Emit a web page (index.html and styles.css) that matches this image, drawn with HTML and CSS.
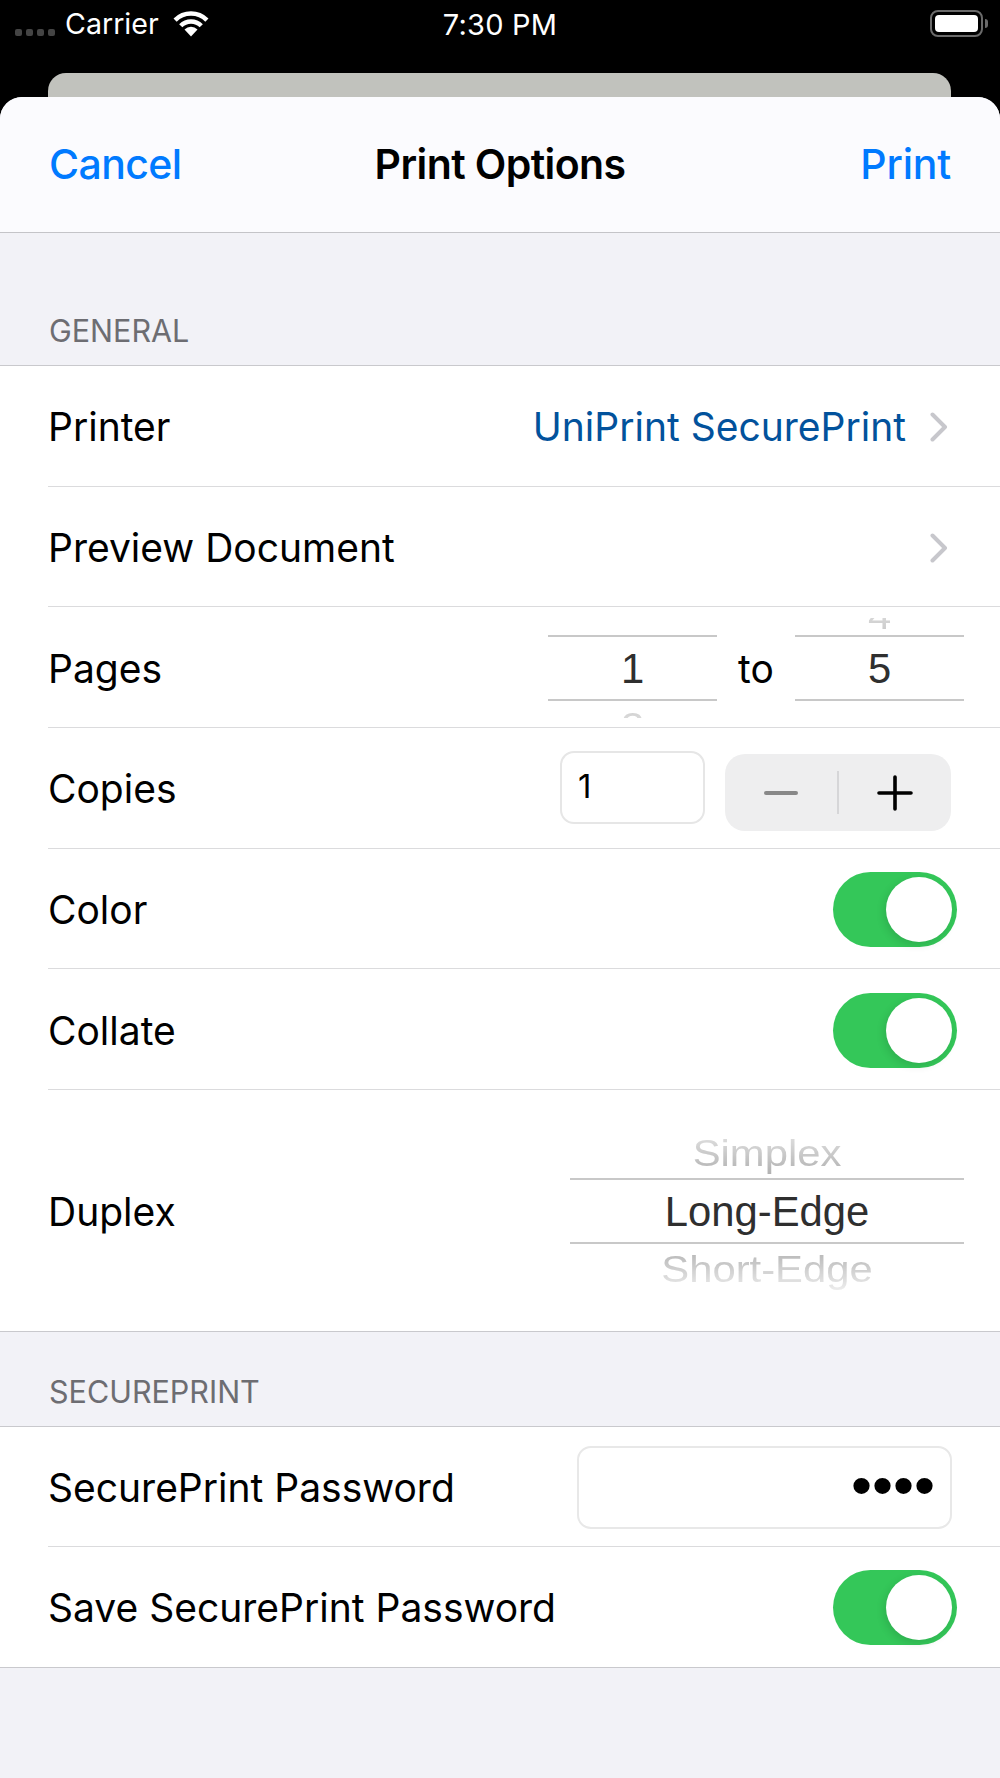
FILE: index.html
```html
<!DOCTYPE html>
<html lang="en">
<head>
  <meta charset="UTF-8" />
  <meta name="viewport" content="width=device-width, initial-scale=1.0"/>
  <title>Print Options</title>
  <link rel="stylesheet" href="styles.css">
</head>
<body>
  <!-- Status bar -->
  <div class="status-bar">
    <div class="status-left">
      <div class="signal"><i></i><i></i><i></i><i></i></div>
      <span class="carrier">Carrier</span>
      <svg class="wifi" width="36" height="27" viewBox="0 0 36 27">
        <path d="M18 26.5 L11.5 19.5 A9.2 9.2 0 0 1 24.5 19.5 Z" fill="#fff"/>
        <path d="M7.75 15.75 A14.5 14.5 0 0 1 28.25 15.75" fill="none" stroke="#fff" stroke-width="4.5"/>
        <path d="M2.1 10.1 A22.5 22.5 0 0 1 33.9 10.1" fill="none" stroke="#fff" stroke-width="4.5"/>
      </svg>
    </div>
    <span class="clock">7:30 PM</span>
    <div class="status-right">
      <div class="battery"><div class="battery-level"></div></div>
      <div class="battery-nub"></div>
    </div>
  </div>

  <div class="card-behind"></div>

  <div class="sheet">
    <div class="nav">
      <span class="nav-btn">Cancel</span>
      <span class="nav-title">Print Options</span>
      <span class="nav-btn nav-btn-right">Print</span>
    </div>

    <!-- General -->
    <div class="section-title section-general">GENERAL</div>
    <div class="group">
      <div class="row">
        <span class="label">Printer</span>
        <div class="row-right">
          <span class="value-link">UniPrint SecurePrint</span>
          <svg class="chevron" width="18" height="30" viewBox="0 0 18 30">
            <path d="M2.5 2.5 L15 15 L2.5 27.5" fill="none" stroke="#c7c7cc" stroke-width="4" stroke-linecap="round" stroke-linejoin="round"/>
          </svg>
        </div>
      </div>
      <div class="row">
        <span class="label">Preview Document</span>
        <div class="row-right">
          <svg class="chevron" width="18" height="30" viewBox="0 0 18 30">
            <path d="M2.5 2.5 L15 15 L2.5 27.5" fill="none" stroke="#c7c7cc" stroke-width="4" stroke-linecap="round" stroke-linejoin="round"/>
          </svg>
        </div>
      </div>
      <div class="row">
        <span class="label">Pages</span>
        <div class="row-right pages">
          <div class="wheel wheel-small">
            <div class="wheel-item"></div>
            <div class="wheel-selected">1</div>
            <div class="wheel-item wheel-below">2</div>
          </div>
          <span class="pages-to">to</span>
          <div class="wheel wheel-small">
            <div class="wheel-item wheel-above">4</div>
            <div class="wheel-selected">5</div>
            <div class="wheel-item"></div>
          </div>
        </div>
      </div>
      <div class="row">
        <span class="label">Copies</span>
        <div class="row-right copies">
          <div class="copies-field">1</div>
          <div class="stepper">
            <div class="stepper-btn"><div class="stepper-minus"></div></div>
            <div class="stepper-divider"></div>
            <div class="stepper-btn">
              <svg width="36" height="36" viewBox="0 0 36 36">
                <path d="M2 18 H34 M18 2 V34" stroke="#000" stroke-width="3.6" stroke-linecap="round"/>
              </svg>
            </div>
          </div>
        </div>
      </div>
      <div class="row">
        <span class="label">Color</span>
        <div class="row-right"><div class="toggle"><div class="knob"></div></div></div>
      </div>
      <div class="row">
        <span class="label">Collate</span>
        <div class="row-right"><div class="toggle"><div class="knob"></div></div></div>
      </div>
      <div class="row row-tall">
        <span class="label">Duplex</span>
        <div class="row-right">
          <div class="wheel wheel-large">
            <div class="wheel-item wheel-above">Simplex</div>
            <div class="wheel-selected">Long-Edge</div>
            <div class="wheel-item wheel-below">Short-Edge</div>
          </div>
        </div>
      </div>
    </div>

    <!-- SecurePrint -->
    <div class="section-title section-secure">SECUREPRINT</div>
    <div class="group">
      <div class="row row-secure">
        <span class="label">SecurePrint Password</span>
        <div class="row-right"><div class="password-field">••••</div></div>
      </div>
      <div class="row row-secure row-last">
        <span class="label">Save SecurePrint Password</span>
        <div class="row-right"><div class="toggle"><div class="knob"></div></div></div>
      </div>
    </div>
  </div>
</body>
</html>
```

FILE: styles.css
```css
* {
  box-sizing: border-box;
}

body {
  margin: 0;
  background-color: #000;
  font-family: Inter, "Liberation Sans", sans-serif;
  color: #000;
}

/* status bar */
.status-bar {
  height: 73px;
  display: grid;
  grid-template-columns: 1fr auto 1fr;
  align-items: start;
  color: #fff;
  font-size: 29px;
}

.status-left {
  display: flex;
  align-items: center;
  height: 48px;
  padding-left: 15px;
}

.signal {
  display: flex;
  gap: 4px;
  margin-top: 17px;
}

.signal i {
  width: 7px;
  height: 7px;
  border-radius: 2px;
  background-color: #444;
}

.carrier {
  margin-left: 10px;
  line-height: 50px;
  font-size: 28.6px;
}

.wifi {
  margin-left: 14px;
  margin-top: -1px;
}

.clock {
  line-height: 50px;
  letter-spacing: 0.2px;
}

.status-right {
  display: flex;
  justify-content: flex-end;
  align-items: center;
  height: 47px;
  padding-right: 12px;
}

.battery {
  width: 53px;
  height: 27px;
  padding: 3px;
  border: 2px solid #6a6a6a;
  border-radius: 8px;
}

.battery-level {
  height: 100%;
  background-color: #fff;
  border-radius: 4px;
}

.battery-nub {
  width: 3px;
  height: 9px;
  margin-left: 2px;
  background-color: #6a6a6a;
  border-radius: 0 3px 3px 0;
}

.card-behind {
  height: 24px;
  margin: 0 49px 0 48px;
  background-color: #c1c2bd;
  border-radius: 18px 18px 0 0;
}

.sheet {
  height: 1681px;
  background-color: #f2f2f7;
  border-radius: 22px 22px 0 0;
  overflow: hidden;
}

/* nav */
.nav {
  height: 136px;
  padding: 0 49px 2px;
  display: grid;
  grid-template-columns: 1fr auto 1fr;
  align-items: center;
  background-color: #fbfbfe;
  border-bottom: 1px solid #c4c4c8;
  font-size: 41px;
  letter-spacing: -0.6px;
}

.nav-btn {
  color: #007aff;
  font-weight: 500;
}

.nav-btn-right {
  text-align: right;
  letter-spacing: -0.2px;
}

.nav-title {
  font-weight: 600;
}

/* sections */
.section-title {
  display: flex;
  align-items: flex-end;
  padding-left: 49px;
  font-size: 30.5px;
  color: #6d6d72;
}

.section-general {
  height: 132px;
  padding-bottom: 16px;
}

.section-secure {
  height: 94px;
  padding-bottom: 16px;
}

.group {
  background-color: #fff;
  border-top: 1px solid #c9c9cd;
  border-bottom: 1px solid #c9c9cd;
}

.row {
  height: 120.7px;
  margin-left: 48px;
  padding-top: 2px;
  display: flex;
  justify-content: space-between;
  align-items: center;
  border-bottom: 1px solid #dbdbdd;
  font-size: 39px;
}

.row-tall {
  height: 240.8px;
  border-bottom: none;
}

.row-secure {
  height: 120px;
}

.row-last {
  border-bottom: none;
}

.row-right {
  display: flex;
  align-items: center;
}

.value-link {
  color: #02529c;
}

.chevron {
  margin-left: 24px;
  margin-right: 52px;
}

/* picker wheels */
.wheel {
  display: flex;
  flex-direction: column;
  justify-content: center;
  align-items: stretch;
  overflow: hidden;
  margin-right: 36px;
  font-family: "Liberation Sans", sans-serif;
  font-size: 41.8px;
  text-align: center;
}

.wheel-small {
  width: 169px;
  height: 100px;
  margin-right: 0;
}

.wheel-large {
  width: 394px;
  height: 172px;
  margin-top: -2px;
}

.wheel-selected {
  flex: none;
  height: 66px;
  line-height: 64px;
  color: #2f2f2f;
  border-top: 2px solid #c8c8c8;
  border-bottom: 2px solid #c8c8c8;
}

.wheel-item {
  flex: none;
  height: 50px;
  line-height: 52px;
  color: #a8a8a8;
  transform: scaleY(0.88);
}

.wheel-small .wheel-item {
  height: 46px;
  color: #c4c4c4;
}

.wheel-small .wheel-above {
  line-height: 56px;
}

.wheel-above {
  -webkit-mask-image: linear-gradient(to bottom, rgba(0, 0, 0, 0.3), rgba(0, 0, 0, 0.9));
  mask-image: linear-gradient(to bottom, rgba(0, 0, 0, 0.3), rgba(0, 0, 0, 0.9));
}

.wheel-below {
  -webkit-mask-image: linear-gradient(to bottom, rgba(0, 0, 0, 0.9), rgba(0, 0, 0, 0.2));
  mask-image: linear-gradient(to bottom, rgba(0, 0, 0, 0.9), rgba(0, 0, 0, 0.2));
}

.pages {
  margin-right: 36px;
}

.pages-to {
  width: 78px;
  text-align: center;
}

/* copies */
.copies {
  margin-right: 49px;
  gap: 20px;
}

.copies-field {
  width: 145px;
  height: 73px;
  margin-top: -3px;
  padding-left: 16px;
  line-height: 66px;
  font-size: 33px;
  border: 2px solid #e6e6e6;
  border-radius: 14px;
}

.stepper {
  width: 226px;
  height: 77px;
  margin-top: 8px;
  display: flex;
  align-items: center;
  background-color: #eeeeef;
  border-radius: 20px;
}

.stepper-btn {
  flex: 1;
  display: flex;
  justify-content: center;
  align-items: center;
}

.stepper-minus {
  width: 34px;
  height: 4px;
  background-color: #888;
  border-radius: 2px;
}

.stepper-divider {
  width: 2px;
  height: 43px;
  background-color: #d6d6d8;
}

/* toggle */
.toggle {
  width: 124px;
  height: 75px;
  margin-right: 43px;
  padding: 5px;
  display: flex;
  justify-content: flex-end;
  background-color: #34c759;
  border-radius: 38px;
}

.knob {
  width: 66px;
  height: 65px;
  background-color: #fff;
  border-radius: 50%;
  box-shadow: -2px 3px 8px rgba(0, 0, 0, 0.12);
}

/* password */
.password-field {
  width: 375px;
  height: 83px;
  margin-right: 48px;
  padding-right: 15px;
  text-align: right;
  font-family: "Liberation Sans", sans-serif;
  font-size: 60px;
  line-height: 76px;
  border: 2px solid #e8e8e8;
  border-radius: 14px;
}
```
